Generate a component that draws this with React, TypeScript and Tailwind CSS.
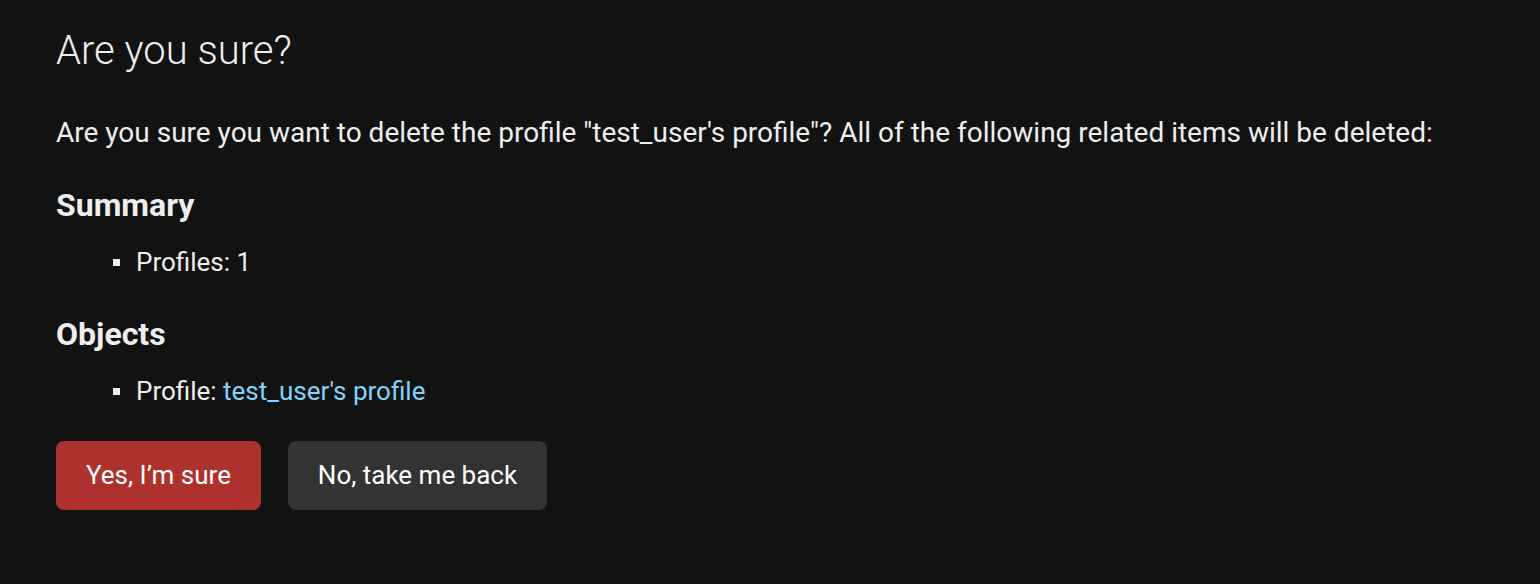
import React from "react";

function Bullet() {
  return <span className="mt-[15px] mr-[16px] h-[7px] w-[7px] shrink-0 bg-[#eeeeee]" />;
}

export default function App() {
  return (
    <div
      className="min-h-[584px] w-full bg-[#121212] pl-[56px] pt-[27px] text-[#eeeeee]"
      style={{ fontFamily: "Roboto, 'Liberation Sans', sans-serif" }}
    >
      <h1 className="text-[40px] font-light leading-[48px] text-[#eeeeee]">Are you sure?</h1>
      <p className="mt-[40px] text-[28px] leading-[36px]">
        Are you sure you want to delete the profile "test_user's profile"? All of the following related items will be deleted:
      </p>
      <h2 className="mt-[34px] text-[32px] font-bold leading-[40px]">Summary</h2>
      <ul className="mt-[19px] pl-[57px]">
        <li className="flex text-[26px] leading-[36px]">
          <Bullet />
          <span>Profiles: 1</span>
        </li>
      </ul>
      <h2 className="mt-[34px] text-[32px] font-bold leading-[40px]">Objects</h2>
      <ul className="mt-[19px] pl-[57px]">
        <li className="flex text-[26px] leading-[36px]">
          <Bullet />
          <span>
            Profile: <a className="text-[#81d4fa]">test_user's profile</a>
          </span>
        </li>
      </ul>
      <div className="mt-[32px] flex gap-[27px]">
        <button className="flex h-[69px] w-[205px] items-center justify-center rounded-[8px] bg-[#ad312c] text-[26px] text-white">
          Yes, I’m sure
        </button>
        <button className="flex h-[69px] w-[259px] items-center justify-center rounded-[8px] bg-[#333333] text-[26px] text-white">
          No, take me back
        </button>
      </div>
    </div>
  );
}
